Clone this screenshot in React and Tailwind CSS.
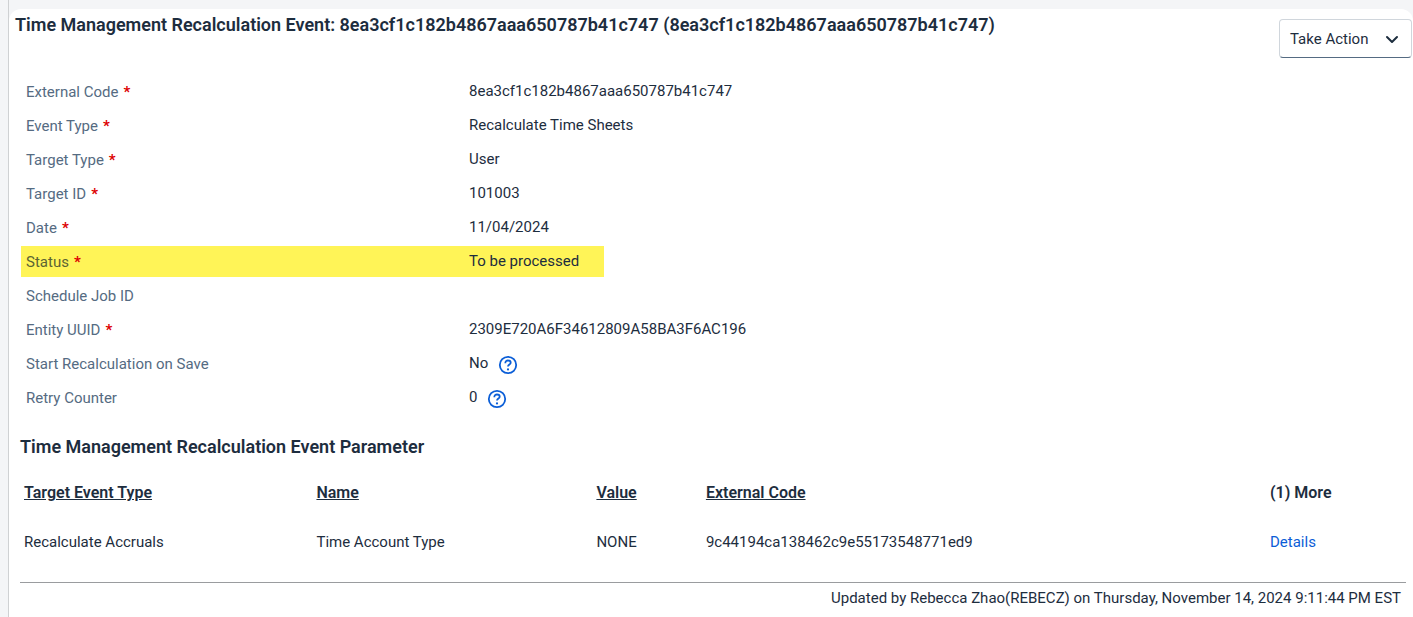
import React from "react";

const fields = [
  { label: "External Code", required: true, value: "8ea3cf1c182b4867aaa650787b41c747" },
  { label: "Event Type", required: true, value: "Recalculate Time Sheets" },
  { label: "Target Type", required: true, value: "User" },
  { label: "Target ID", required: true, value: "101003" },
  { label: "Date", required: true, value: "11/04/2024" },
  { label: "Status", required: true, value: "To be processed", highlight: true },
  { label: "Schedule Job ID", value: "" },
  { label: "Entity UUID", required: true, value: "2309E720A6F34612809A58BA3F6AC196" },
  { label: "Start Recalculation on Save", value: "No", help: true },
  { label: "Retry Counter", value: "0", help: true },
];

function HelpButton({ label }) {
  return (
    <button type="button" aria-label={`Help for ${label}`} className="mt-1 ml-2.5 text-[#0b5ed7]">
      <svg viewBox="0 0 20 20" className="block size-5" fill="none" stroke="currentColor" strokeWidth="1.8">
        <circle cx="10" cy="10" r="8.2" />
        <path d="M7.3 8.2C7.3 6.4 8.5 5.5 10 5.5S12.7 6.4 12.7 7.8C12.7 9.6 10 9.6 10 11.6" />
        <circle cx="10" cy="14.4" r="1.1" fill="currentColor" stroke="none" />
      </svg>
    </button>
  );
}

function Field({ label, required, value, highlight, help }) {
  return (
    <div className="flex h-[34px] items-center">
      <div className={`flex h-[31px] w-full max-w-[583px] items-center ${highlight ? "bg-[#fff457]" : ""}`}>
        <dt className={`w-[448px] shrink-0 pt-px pl-[5px] ${highlight ? "text-[#5c6434]" : "text-[#556b82]"}`}>
          {label}
          {required && <span className="ml-[5px] font-bold text-[#dd0000]">*</span>}
        </dt>
        <dd className="flex items-center whitespace-nowrap">
          {value}
          {help && <HelpButton label={label} />}
        </dd>
      </div>
    </div>
  );
}

export default function App() {
  return (
    <div className="min-h-screen bg-[#f4f5f7] pl-2 font-['Roboto','Liberation_Sans',sans-serif] text-[15px] leading-5 text-[#1d2d3e]">
      <div className="min-h-screen border-l border-[#cfd1d3] pt-[9px]">
        <main className="min-h-[608px] rounded-t-xl bg-white pb-2">
          <header className="flex items-start justify-between pr-px pl-1.5">
            <h1 className="pt-1 text-[18px] leading-6 font-semibold">
              Time Management Recalculation Event: 8ea3cf1c182b4867aaa650787b41c747 (8ea3cf1c182b4867aaa650787b41c747)
            </h1>
            <button
              type="button"
              className="mt-2.5 flex h-[39px] w-[133px] items-center justify-between rounded border border-[#d0d6dc] border-b-[#556b82] bg-white pr-3 pl-2.5"
            >
              Take Action
              <svg viewBox="0 0 14 14" className="size-3.5" fill="none" stroke="currentColor" strokeWidth="2" strokeLinecap="round" strokeLinejoin="round">
                <path d="M2 5l5 5 5-5" />
              </svg>
            </button>
          </header>

          <dl className="mt-4 pl-3">
            {fields.map((f) => (
              <Field key={f.label} {...f} />
            ))}
          </dl>

          <section className="mt-[21px] pr-[7px] pl-[11px]">
            <h2 className="text-[18px] leading-6 font-semibold">Time Management Recalculation Event Parameter</h2>
            <table className="mt-2.5 w-full table-fixed text-left">
              <colgroup>
                <col className="w-[21.1%]" />
                <col className="w-[20.2%]" />
                <col className="w-[7.9%]" />
                <col className="w-[40.7%]" />
                <col />
              </colgroup>
              <thead className="text-base">
                <tr className="h-12">
                  <th className="px-1 font-semibold underline">Target Event Type</th>
                  <th className="px-1 font-semibold underline">Name</th>
                  <th className="px-1 font-semibold underline">Value</th>
                  <th className="px-1 font-semibold underline">External Code</th>
                  <th className="px-1 font-semibold">(1) More</th>
                </tr>
              </thead>
              <tbody>
                <tr className="h-[50px]">
                  <td className="px-1">Recalculate Accruals</td>
                  <td className="px-1">Time Account Type</td>
                  <td className="px-1">NONE</td>
                  <td className="px-1">9c44194ca138462c9e55173548771ed9</td>
                  <td className="px-1">
                    <a href="#details" className="text-[#0b5ed7]">Details</a>
                  </td>
                </tr>
              </tbody>
            </table>
            <footer className="mt-[15px] border-t border-[#9a9c9f] pt-[5px] pr-[5px] text-right">
              Updated by Rebecca Zhao(REBECZ) on Thursday, November 14, 2024 9:11:44 PM EST
            </footer>
          </section>
        </main>
      </div>
    </div>
  );
}
